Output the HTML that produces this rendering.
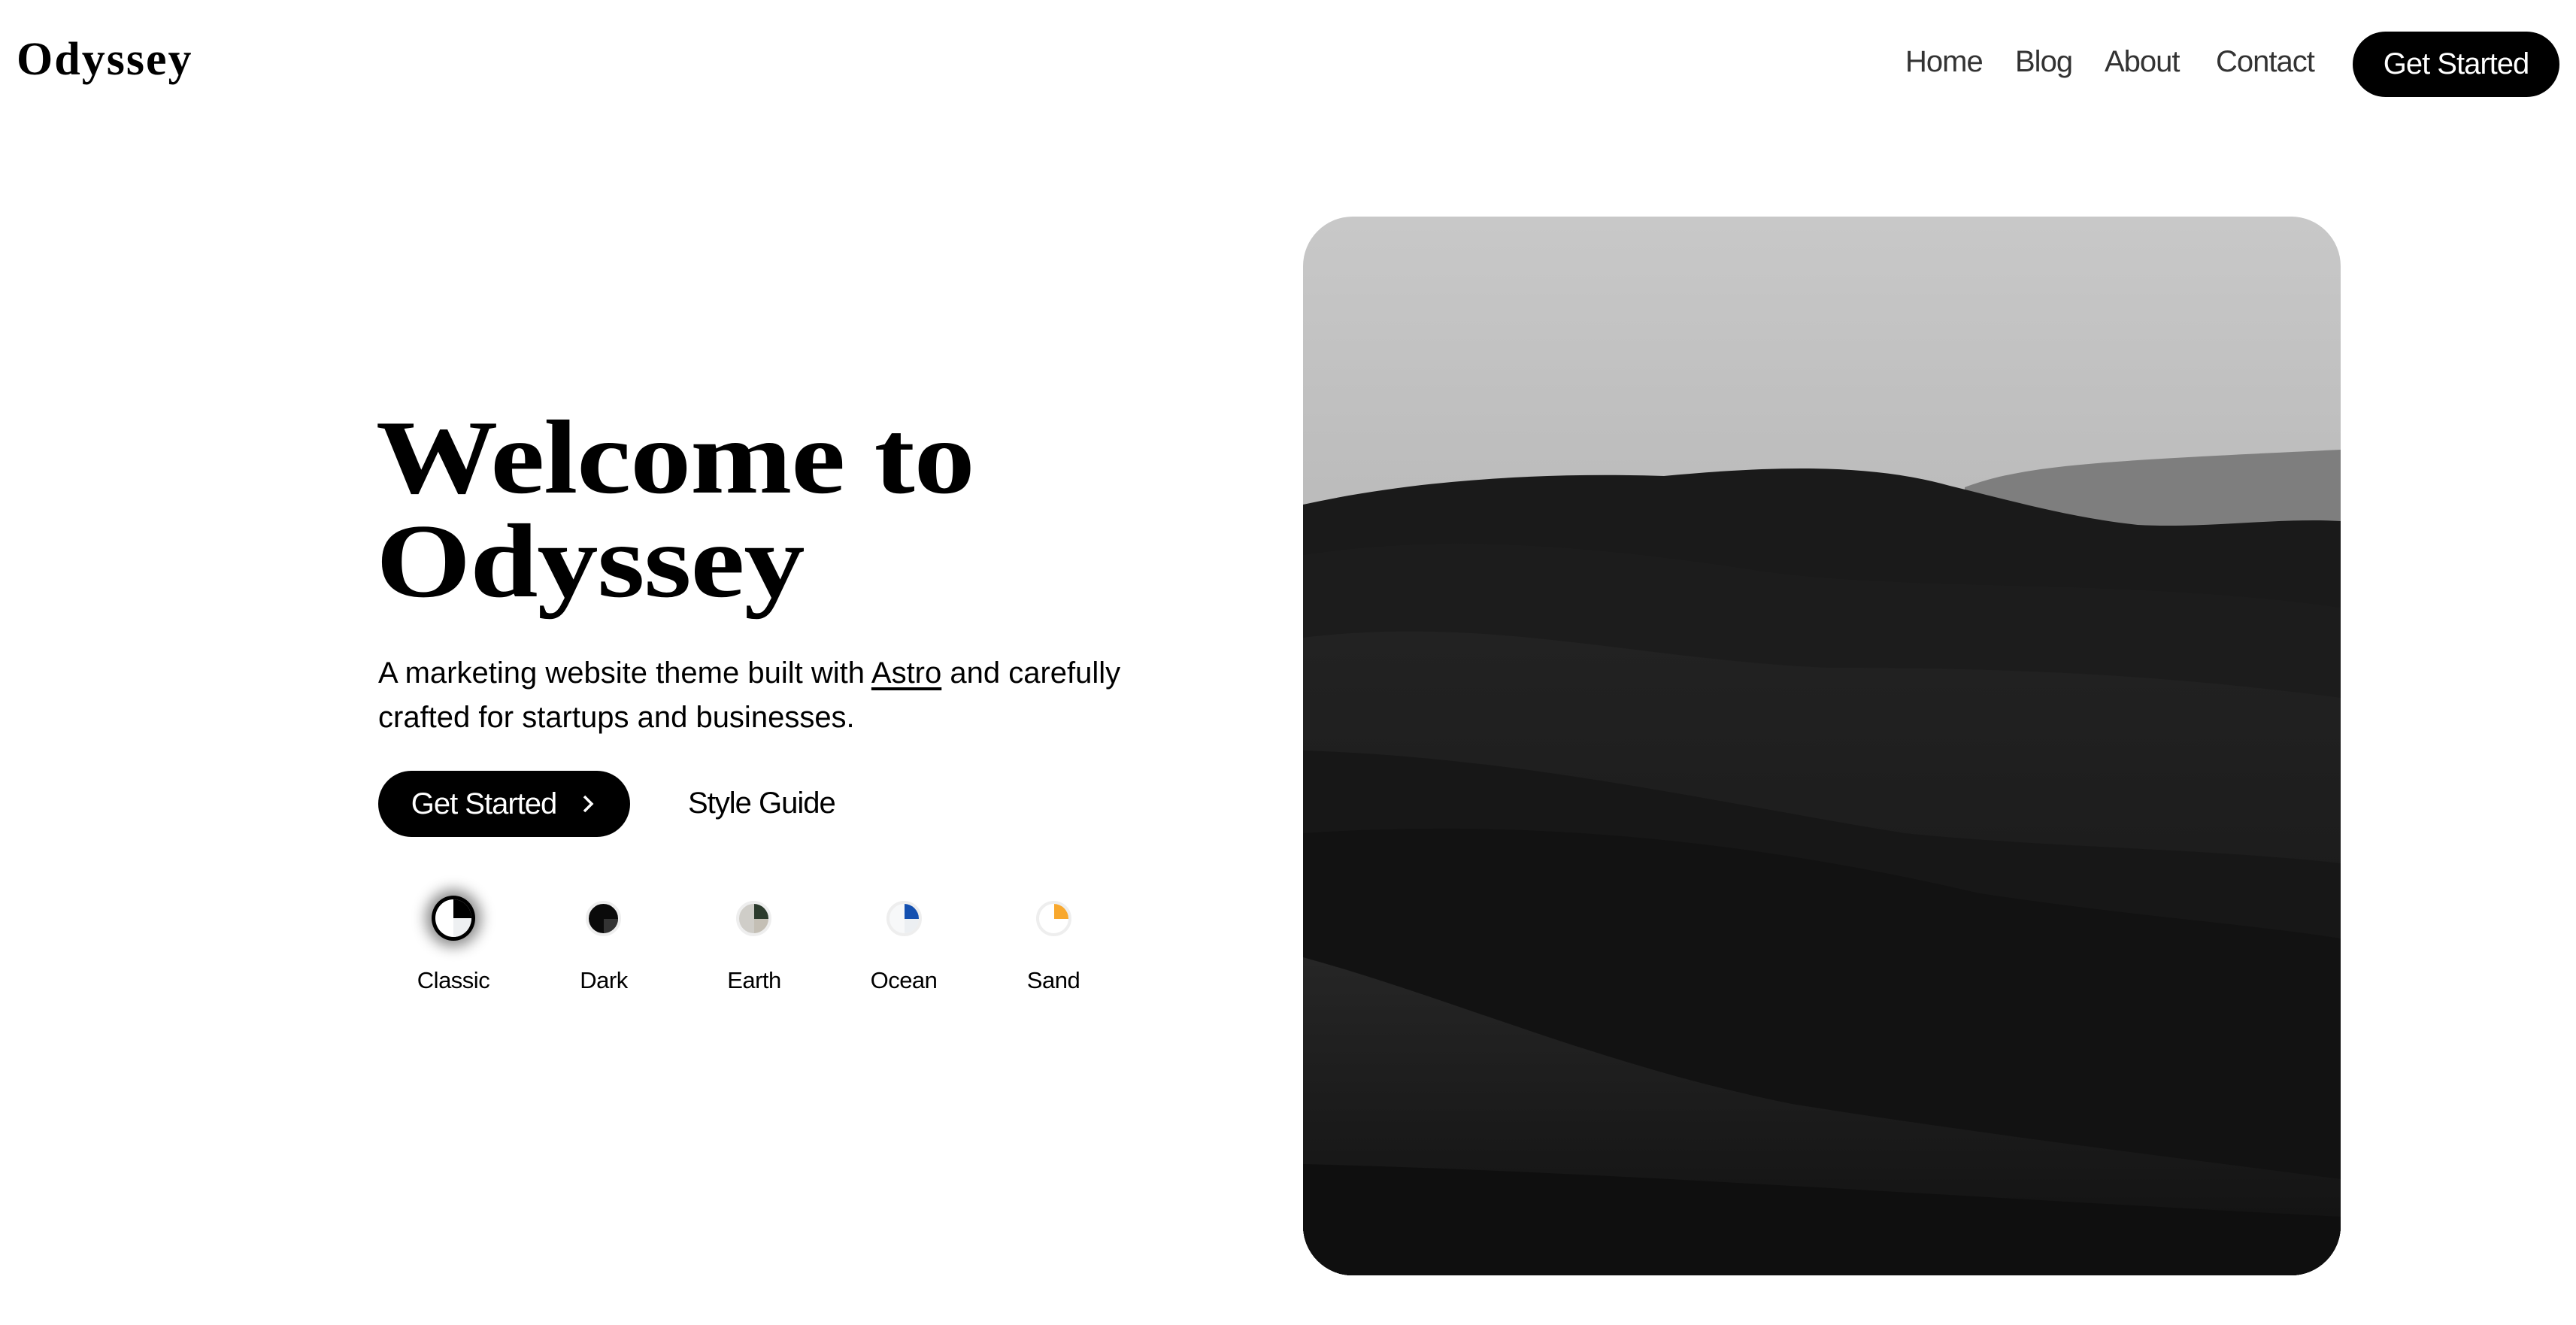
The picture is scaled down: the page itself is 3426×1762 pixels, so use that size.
<!DOCTYPE html>
<html><head><meta charset="utf-8"><style>
*{margin:0;padding:0;box-sizing:border-box}
body{width:3426px;height:1762px;background:#fff;position:relative;overflow:hidden;font-family:"Liberation Sans",sans-serif;color:#000}
.abs{position:absolute;white-space:nowrap}
.logo{left:22px;top:44px;font-family:"Liberation Serif",serif;font-weight:bold;font-size:62px;letter-spacing:2px}
.nav{top:60px;font-size:40px;color:#333;letter-spacing:-1px}
.btn{background:#000;color:#fff;border-radius:60px;display:flex;align-items:center;justify-content:center}
h1{position:absolute;left:500px;top:540px;font-family:"Liberation Serif",serif;font-weight:bold;font-size:140px;line-height:138px;letter-spacing:-1px;transform:scaleX(1.16);transform-origin:left top;white-space:nowrap}
.p{left:503px;top:866px;font-size:40px;line-height:59px;letter-spacing:0px}
.sw{position:absolute;width:47px;height:47px;border-radius:50%;top:1198px;border:4px solid #eee;overflow:hidden}
.sw i{position:absolute;width:50%;height:50%}
.lbl{position:absolute;top:1286px;font-size:31px;width:200px;text-align:center;letter-spacing:-0.5px}
</style></head><body>
<div class="abs logo">Odyssey</div>
<div class="abs nav" style="left:2534px">Home</div>
<div class="abs nav" style="left:2680px">Blog</div>
<div class="abs nav" style="left:2799px">About</div>
<div class="abs nav" style="left:2947px">Contact</div>
<div class="abs btn" style="left:3129px;top:42px;width:275px;height:87px;font-size:40px;letter-spacing:-1px">Get Started</div>

<h1>Welcome to<br>Odyssey</h1>
<div class="abs p">A marketing website theme built with <span style="text-decoration:underline;text-underline-offset:6px">Astro</span> and carefully<br>crafted for startups and businesses.</div>

<div class="abs btn" style="left:503px;top:1025px;width:335px;height:88px;font-size:40px;letter-spacing:-1px">Get Started<svg width="24" height="30" viewBox="0 0 24 30" style="margin-left:30px"><path d="M7 5 L17 15 L7 25" fill="none" stroke="#fff" stroke-width="3.5"/></svg></div>
<div class="abs" style="left:915px;top:1046px;font-size:40px;letter-spacing:-1px">Style Guide</div>

<div class="sw" style="left:574px;border:5px solid #000;box-shadow:0 0 18px 8px rgba(0,0,0,.45);width:58px;height:60px;top:1191px;background:#fff"><i style="left:50%;top:0;background:#000"></i><i style="left:50%;top:50%;background:#eef0f2"></i></div>
<div class="sw" style="left:779px;background:#0a0a0a"><i style="left:50%;top:50%;background:#333"></i></div>
<div class="sw" style="left:979px;background:#cfcdc8"><i style="left:50%;top:0;background:#2c3b2d"></i><i style="left:50%;top:50%;background:#c4bfb5"></i></div>
<div class="sw" style="left:1179px;background:#f7f8f9"><i style="left:50%;top:0;background:#1450b0"></i><i style="left:50%;top:50%;background:#eceff2"></i></div>
<div class="sw" style="left:1378px;background:#fff"><i style="left:50%;top:0;background:#f8a82e"></i></div>
<div class="lbl" style="left:503px">Classic</div>
<div class="lbl" style="left:703px">Dark</div>
<div class="lbl" style="left:903px">Earth</div>
<div class="lbl" style="left:1102px">Ocean</div>
<div class="lbl" style="left:1301px">Sand</div>

<svg class="abs" style="left:1733px;top:288px;border-radius:66px" width="1380" height="1408" viewBox="0 0 1380 1408">
<defs>
<linearGradient id="sky" x1="0" y1="0" x2="0" y2="1"><stop offset="0" stop-color="#c8c8c8"/><stop offset="1" stop-color="#9a9a9a"/></linearGradient>
<linearGradient id="g1" x1="0" y1="0" x2="0" y2="1"><stop offset="0" stop-color="#222"/><stop offset="1" stop-color="#131313"/></linearGradient>
<linearGradient id="g2" x1="0" y1="0" x2="0" y2="1"><stop offset="0" stop-color="#262626"/><stop offset="1" stop-color="#101010"/></linearGradient>
</defs>
<rect width="1380" height="1408" fill="url(#sky)"/>
<path d="M880 360 C960 330 1060 325 1380 310 L1380 420 L880 420Z" fill="#7e7e7e"/>
<path d="M0 383 C150 350 320 340 480 345 C640 330 760 330 860 358 C950 380 1020 400 1110 410 C1200 415 1300 400 1380 405 L1380 1408 L0 1408Z" fill="#1a1a1a"/>
<path d="M0 450 C200 420 400 440 600 470 C800 500 1100 480 1380 520 L1380 1408 L0 1408Z" fill="#1c1c1c"/>
<path d="M0 560 C250 530 450 590 700 600 C950 600 1150 610 1380 640 L1380 1408 L0 1408Z" fill="url(#g1)"/>
<path d="M0 710 C300 720 550 780 800 820 C1000 840 1200 840 1380 860 L1380 1408 L0 1408Z" fill="#171717"/>
<path d="M0 820 C300 800 600 830 900 900 C1100 930 1250 940 1380 960 L1380 1408 L0 1408Z" fill="#121212"/>
<path d="M0 985 C200 1040 400 1130 650 1180 C900 1220 1150 1250 1380 1280 L1380 1408 L0 1408Z" fill="url(#g2)"/>
<path d="M0 1260 C400 1270 800 1300 1380 1330 L1380 1408 L0 1408Z" fill="#0f0f0f"/>
</svg>
</body></html>
